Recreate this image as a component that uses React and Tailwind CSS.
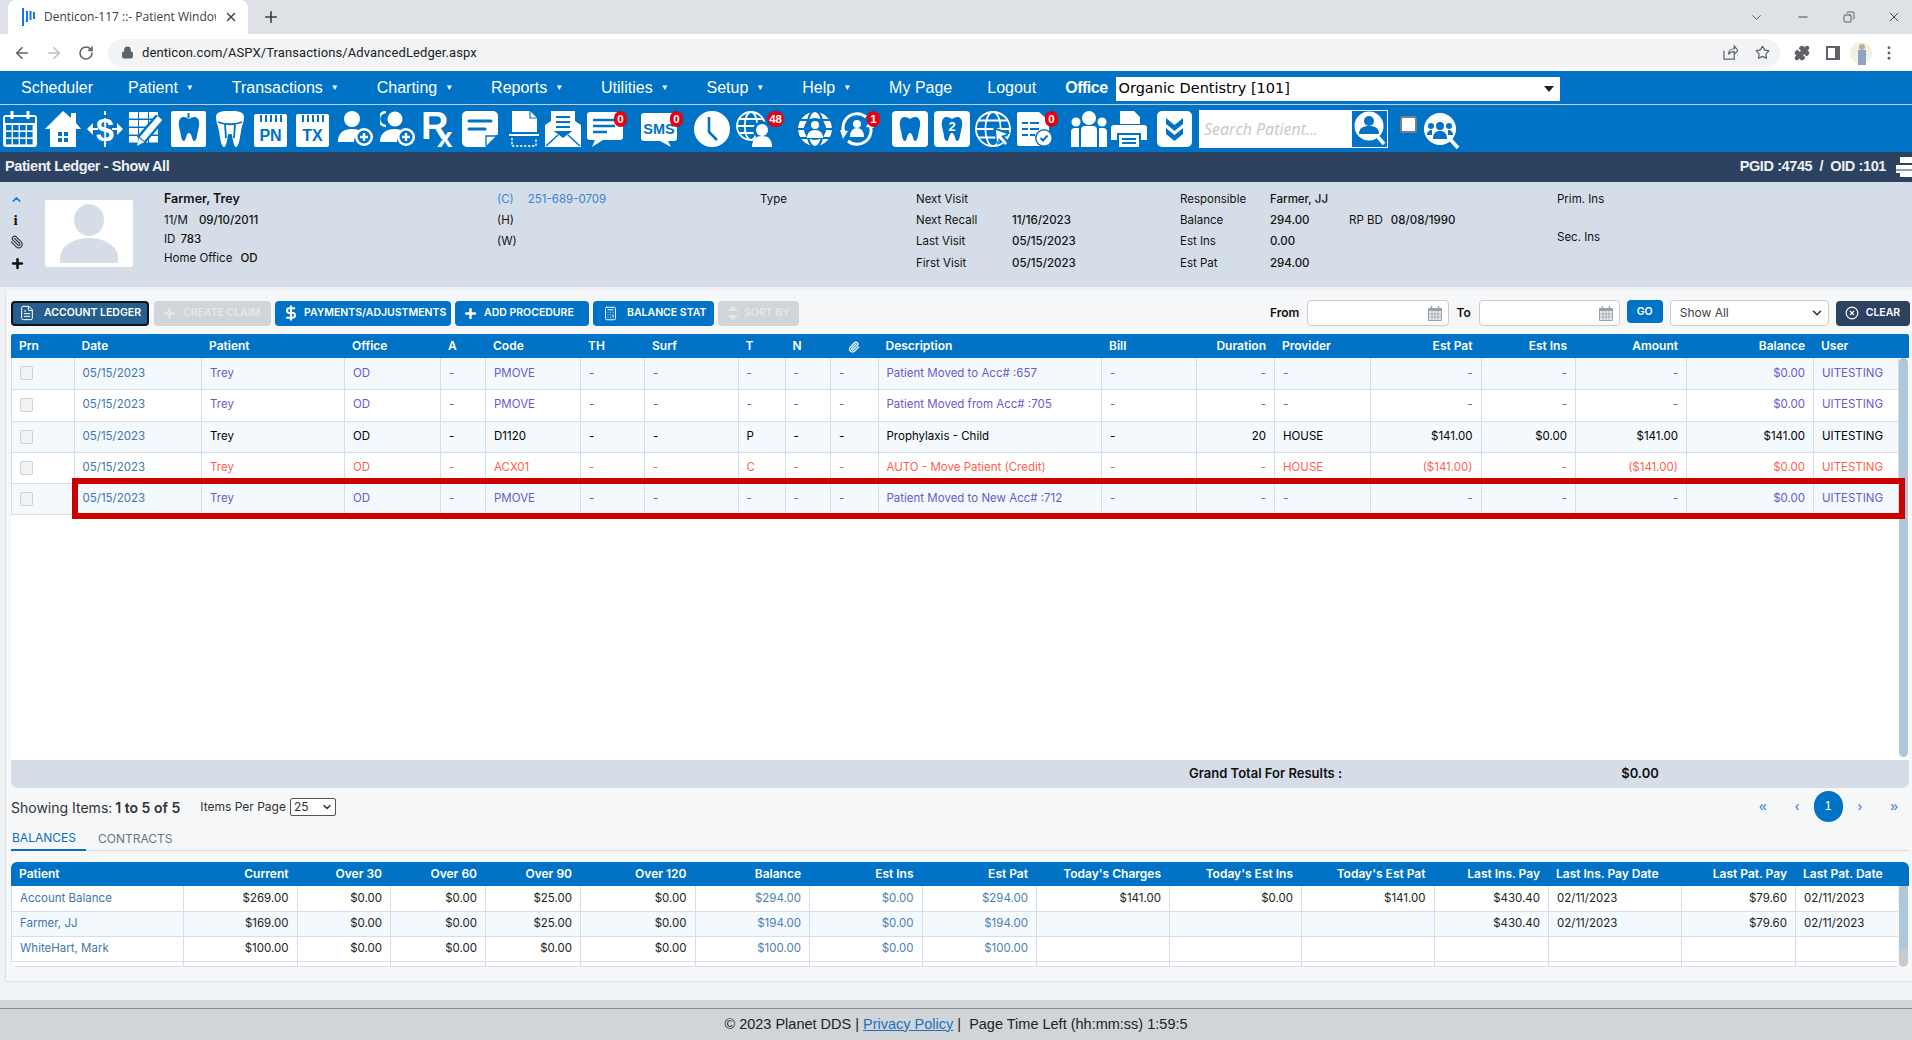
import {
  ArrowLeft,
  ArrowRight,
  RotateCw,
  Lock,
  Star,
  Puzzle,
  X,
  Plus,
  ChevronDown,
  ChevronUp,
  Minus,
  Paperclip,
  FileText,
  DollarSign,
  Calculator,
  CircleX,
  Copy,
} from "lucide-react";

const B = "#0073c6";

const Ic = ({ children, vb = "0 0 36 36" }) => (
  <svg viewBox={vb} className="w-[36px] h-[36px] block">
    {children}
  </svg>
);

const toothPath =
  "M18 8c-3-2-7-3-9 0-2 3-1 8 0 12 1 3 1 10 4 10 2 0 2-8 5-8s3 8 5 8c3 0 3-7 4-10 1-4 2-9 0-12-2-3-6-2-9 0z";

const Globe = ({ cx = 18, cy = 18, r = 16, sw = 2, stroke = "#fff" }) => (
  <g fill="none" stroke={stroke} strokeWidth={sw}>
    <circle cx={cx} cy={cy} r={r} />
    <ellipse cx={cx} cy={cy} rx={r * 0.45} ry={r} />
    <path d={`M${cx - r} ${cy}h${r * 2}M${cx - r * 0.85} ${cy - r * 0.5}h${r * 1.7}M${cx - r * 0.85} ${cy + r * 0.5}h${r * 1.7}`} />
  </g>
);

const Notepad = ({ label }) => (
  <Ic>
    <rect y="3" width="33" height="33" rx="2" fill="#fff" />
    <path d="M7 4v7M12 4v7M17 4v7M22 4v7M27 4v7" stroke={B} strokeWidth="2" />
    <text x="16.5" y="30" textAnchor="middle" fontSize="16" fontWeight="700" fontFamily="Liberation Sans" fill={B}>
      {label}
    </text>
  </Ic>
);

const icons = [
  {
    el: (
      <Ic>
        <rect y="4" width="34" height="32" rx="3" fill="#fff" />
        <rect x="2" y="6" width="30" height="6" fill={B} />
        {[14, 21, 28].map((y) =>
          [3, 10, 17, 24].map((x) => <rect key={x + "-" + y} x={x} y={y} width="5.6" height="5.4" fill={B} />),
        )}
        <path d="M9 0v8M25 0v8" stroke="#fff" strokeWidth="3" />
      </Ic>
    ),
  },
  {
    ml: "ml-[6px]",
    el: (
      <Ic>
        <path d="M18 0l8 7V2h5v10l5 6h-5v18H5V18H0z" fill="#fff" />
        <path d="M13 21h4v4h-4zM19 21h4v4h-4zM13 27h4v4h-4zM19 27h4v4h-4z" fill={B} />
      </Ic>
    ),
  },
  {
    ml: "ml-[6px]",
    el: (
      <Ic>
        <path d="M0 18l6-6v12zM36 18l-6-6v12z" fill="#fff" />
        <path d="M6 18h5M25 18h5M18 0v4M18 32v4" stroke="#fff" strokeWidth="2" />
        <text x="18" y="30" textAnchor="middle" fontSize="32" fontWeight="700" fontFamily="Liberation Sans" fill="#fff">
          $
        </text>
      </Ic>
    ),
  },
  {
    ml: "ml-[6px]",
    el: (
      <Ic>
        {[1, 9, 17, 25].map((y) =>
          [0, 10, 20].map((x) => <rect key={x + "-" + y} x={x} y={y} width="9" height="6.5" fill="#fff" />),
        )}
        <path d="M31 7L12 29" stroke={B} strokeWidth="11" />
        <path d="M31 7L13 28" stroke="#fff" strokeWidth="6" />
        <path d="M10 27l5 4-7 4z" fill="#fff" />
      </Ic>
    ),
  },
  {
    ml: "ml-[6px]",
    el: (
      <Ic>
        <rect width="35" height="36" rx="2" fill="#fff" />
        <path d="M0 7h35" stroke={B} strokeWidth="0" />
        <path d="M17.5 2v5" stroke={B} strokeWidth="2" />
        <path d={toothPath} fill={B} />
      </Ic>
    ),
  },
  {
    ml: "ml-[9px]",
    el: (
      <Ic vb="0 0 28 36">
        <path d="M14 0c6 0 14 0 14 6 0 5-2 8-3 14-1 6-2 16-5 16-2 0-3-6-4-12 0-1-1-1-2-1s-2 0-2 1c-1 6-2 12-4 12-3 0-4-10-5-16C2 14 0 11 0 6c0-6 8-6 14-6z" fill="#fff" />
        <path d="M2 11c8 3 16 3 24 0M9 13l1 14M19 13l-1 14" fill="none" stroke={B} strokeWidth="1.8" />
      </Ic>
    ),
    w: "w-[28px]",
    nar: true,
  },
  { ml: "ml-[10px]", el: <Notepad label="PN" /> },
  { ml: "ml-[6px]", el: <Notepad label="TX" /> },
  {
    ml: "ml-[6px]",
    el: (
      <Ic>
        <circle cx="14" cy="8" r="8" fill="#fff" />
        <path d="M0 31c0-9 5-13 14-13 5 0 8 1 10 3-5 1-8 5-8 10z" fill="#fff" />
        <circle cx="26" cy="26" r="9" fill="#fff" stroke={B} strokeWidth="0" />
        <circle cx="26" cy="26" r="6.5" fill={B} />
        <path d="M22 26h8M26 22v8" stroke="#fff" strokeWidth="2.4" />
      </Ic>
    ),
  },
  {
    ml: "ml-[6px]",
    el: (
      <Ic>
        <path d="M6 1a7 7 0 0 0 0 14" fill="none" stroke="#fff" strokeWidth="2.5" />
        <circle cx="15" cy="8" r="7.5" fill="#fff" />
        <path d="M0 31c0-9 6-13 15-13 4 0 7 1 9 3-5 1-7 5-7 10z" fill="#fff" />
        <circle cx="26" cy="26" r="9" fill="#fff" />
        <circle cx="26" cy="26" r="6.5" fill={B} />
        <path d="M22 26h8M26 22v8" stroke="#fff" strokeWidth="2.4" />
      </Ic>
    ),
  },
  {
    ml: "ml-[6px]",
    el: (
      <Ic>
        <text x="-1" y="28" fontSize="38" fontWeight="700" fontFamily="Liberation Sans" fill="#fff">
          R
        </text>
        <text x="15" y="36" fontSize="28" fontWeight="700" fontFamily="Liberation Sans" fill="#fff">
          x
        </text>
      </Ic>
    ),
  },
  {
    ml: "ml-[4px]",
    el: (
      <Ic>
        <path d="M5 0h26a5 5 0 0 1 5 5v18L23 36H5a5 5 0 0 1-5-5V5a5 5 0 0 1 5-5z" fill="#fff" />
        <path d="M7 10h22M7 18h16" stroke={B} strokeWidth="3" strokeLinecap="round" />
        <path d="M24 35V25h11" fill="none" stroke={B} strokeWidth="1.3" />
      </Ic>
    ),
  },
  {
    ml: "ml-[8px]",
    el: (
      <Ic>
        <path d="M6 0h18l7 7v14H6z" fill="#fff" />
        <path d="M24 0v7h7" fill="none" stroke={B} strokeWidth="1.2" />
        <path d="M3 24h30" stroke="#fff" strokeWidth="2" />
        <path d="M6 27v8h24v-8" fill="none" stroke="#fff" strokeWidth="1.4" strokeDasharray="2.4 1.6" />
      </Ic>
    ),
  },
  {
    ml: "ml-[3px]",
    el: (
      <Ic>
        <path d="M6 0h24v20H6z" fill="#fff" />
        <path d="M11 6h14M11 11h14M11 16h14" stroke={B} strokeWidth="2" />
        <path d="M0 14l6-4v8l12 9 12-9v-8l6 4v22H0z" fill="#fff" />
        <path d="M1 35l12-11M35 35L23 24" stroke={B} strokeWidth="1.5" />
      </Ic>
    ),
  },
  {
    ml: "ml-[6px]",
    badge: "0",
    badgePos: "top-0 right-[-4px]",
    el: (
      <Ic>
        <path d="M3 1h30a3 3 0 0 1 3 3v22a3 3 0 0 1-3 3H16L5 36l3-7H3a3 3 0 0 1-3-3V4a3 3 0 0 1 3-3z" fill="#fff" />
        <path d="M6 9h22M6 15h22M6 21h14" stroke={B} strokeWidth="2.6" />
      </Ic>
    ),
  },
  {
    ml: "ml-[18px]",
    badge: "0",
    badgePos: "top-0 right-[-6px]",
    el: (
      <Ic>
        <path d="M3 2h30a3 3 0 0 1 3 3v22a3 3 0 0 1-3 3h-6l3 6-11-6H3a3 3 0 0 1-3-3V5a3 3 0 0 1 3-3z" fill="#fff" />
        <text x="18" y="23" textAnchor="middle" fontSize="14.5" fontWeight="700" fontFamily="Liberation Sans" fill={B}>
          SMS
        </text>
      </Ic>
    ),
  },
  {
    ml: "ml-[17px]",
    el: (
      <Ic>
        <circle cx="18" cy="18" r="18" fill="#fff" />
        <path d="M15 6v15l8 8" fill="none" stroke={B} strokeWidth="2.6" />
      </Ic>
    ),
  },
  {
    ml: "ml-[6px]",
    badge: "48",
    badgePos: "top-0 right-[-12px]",
    el: (
      <Ic>
        <Globe cx={15} cy={15} r={14} sw={1.8} />
        <circle cx="26" cy="19" r="9" fill={B} />
        <circle cx="26" cy="19" r="6" fill="#fff" />
        <path d="M16 36c0-8 4-11 10-11s10 3 10 11z" fill="#fff" />
      </Ic>
    ),
  },
  {
    ml: "ml-[25px]",
    el: (
      <Ic>
        <circle cx="18" cy="18" r="18" fill="#fff" />
        <Globe r={18} sw={2.2} stroke={B} />
        <circle cx="18" cy="18" r="11" fill={B} />
        <circle cx="18" cy="14" r="4" fill="#fff" />
        <path d="M10 27c0-5 3-8 8-8s8 3 8 8z" fill="#fff" />
      </Ic>
    ),
  },
  {
    ml: "ml-[6px]",
    badge: "1",
    badgePos: "top-0 right-[-5px]",
    el: (
      <Ic>
        <path d="M5 22A14 14 0 0 1 27 6M31 14a14 14 0 0 1-22 16" fill="none" stroke="#fff" strokeWidth="3" />
        <path d="M1 19l8 1-5 8zM35 17l-8-1 5-8z" fill="#fff" />
        <circle cx="18" cy="13" r="4" fill="#fff" />
        <path d="M11 26c0-6 3-9 7-9s7 3 7 9z" fill="#fff" />
      </Ic>
    ),
  },
  {
    ml: "ml-[17px]",
    el: (
      <Ic>
        <rect width="36" height="36" rx="4" fill="#fff" />
        <path d={toothPath} fill={B} />
      </Ic>
    ),
  },
  {
    ml: "ml-[6px]",
    el: (
      <Ic>
        <rect width="36" height="36" rx="4" fill="#fff" />
        <path d={toothPath} fill={B} />
        <text x="18" y="20" textAnchor="middle" fontSize="13" fontWeight="700" fontFamily="Liberation Sans" fill="#fff">
          2
        </text>
      </Ic>
    ),
  },
  {
    ml: "ml-[5px]",
    el: (
      <Ic>
        <Globe r={17} sw={1.8} />
        <path d="M18 16l18 6-7 3 6 7-4 4-6-8-3 6z" fill={B} />
        <path d="M21 19l11 4-6 2 6 7-2 2-6-7-2 5z" fill="#fff" />
      </Ic>
    ),
  },
  {
    ml: "ml-[6px]",
    badge: "0",
    badgePos: "top-0 right-[-5px]",
    el: (
      <Ic>
        <path d="M2 1h20l10 9v25H2a2 2 0 0 1-2-2V3a2 2 0 0 1 2-2z" fill="#fff" />
        <path d="M5 12h6M13 12h9M5 18h6M13 18h9M5 24h6M13 24h5" stroke={B} strokeWidth="2" />
        <circle cx="27" cy="27" r="9" fill={B} />
        <circle cx="27" cy="27" r="7.5" fill="#fff" />
        <path d="M23.5 27l2.5 2.5 4.5-5" fill="none" stroke={B} strokeWidth="2" />
      </Ic>
    ),
  },
  {
    ml: "ml-[18px]",
    el: (
      <Ic>
        <circle cx="18" cy="7" r="7" fill="#fff" />
        <circle cx="5" cy="11" r="4.5" fill="#fff" />
        <circle cx="31" cy="11" r="4.5" fill="#fff" />
        <path d="M10 19a4 4 0 0 1 4-4h8a4 4 0 0 1 4 4v17H10zM0 21a4 4 0 0 1 4-4h4v19H0zM28 17h4a4 4 0 0 1 4 4v15h-8z" fill="#fff" />
      </Ic>
    ),
  },
  {
    ml: "ml-[4px]",
    el: (
      <Ic>
        <path d="M9 0h14l6 6v7H9z" fill="#fff" />
        <path d="M3 14h30a3 3 0 0 1 3 3v12h-6v-7H6v7H0V17a3 3 0 0 1 3-3z" fill="#fff" />
        <path d="M8 24h20v12H8z" fill="#fff" />
        <path d="M11 28h14M11 32h14" stroke={B} strokeWidth="2" />
      </Ic>
    ),
  },
  {
    ml: "ml-[10px]",
    el: (
      <Ic>
        <rect width="35" height="36" rx="5" fill="#fff" />
        <path d="M9 7l8.5 7L26 7v6l-8.5 7L9 13zM9 17l8.5 7L26 17v6l-8.5 7L9 23z" fill={B} />
      </Ic>
    ),
  },
];

const Badge = ({ children, pos }) => (
  <span
    className={
      "absolute h-[16px] min-w-[13px] px-[2px] rounded-full bg-[#e60012] text-white text-[11.5px] leading-[16px] font-bold text-center font-['Liberation_Sans',sans-serif] " +
      pos
    }
  >
    {children}
  </span>
);

const menu = [
  { t: "Scheduler" },
  { t: "Patient", c: 1 },
  { t: "Transactions", c: 1 },
  { t: "Charting", c: 1 },
  { t: "Reports", c: 1 },
  { t: "Utilities", c: 1 },
  { t: "Setup", c: 1 },
  { t: "Help", c: 1 },
  { t: "My Page" },
  { t: "Logout" },
];

const ledgerCols = [
  "w-[62.5px]",
  "w-[127.5px]",
  "w-[143px]",
  "w-[96px]",
  "w-[45px]",
  "w-[95px]",
  "w-[64px]",
  "w-[93.5px]",
  "w-[47px]",
  "w-[45.5px]",
  "w-[47.5px]",
  "w-[223.5px]",
  "w-[95px]",
  "w-[78px]",
  "w-[95.5px]",
  "w-[111px]",
  "w-[94.5px]",
  "w-[111px]",
  "w-[127px]",
  "w-[85px]",
];

const ledgerHead = [
  ["Prn", "l"],
  ["Date", "l"],
  ["Patient", "l"],
  ["Office", "l"],
  ["A", "l"],
  ["Code", "l"],
  ["TH", "l"],
  ["Surf", "l"],
  ["T", "l"],
  ["N", "l"],
  ["", "c"],
  ["Description", "l"],
  ["Bill", "l"],
  ["Duration", "r"],
  ["Provider", "l"],
  ["Est Pat", "r"],
  ["Est Ins", "r"],
  ["Amount", "r"],
  ["Balance", "r"],
  ["User", "l"],
];

const purple = "text-[#6a5acd]";
const moved = (desc, h, bg) => ({
  h,
  bg,
  color: purple,
  cells: ["Trey", "OD", "-", "PMOVE", "-", "-", "-", "-", "-", desc, "-", "-", "-", "-", "-", "-", "$0.00", "UITESTING"],
});

const ledgerRows = [
  moved("Patient Moved to Acc# :657", "h-[31px]", "bg-[#f4f9fd]"),
  moved("Patient Moved from Acc# :705", "h-[32px]", "bg-white"),
  {
    h: "h-[31px]",
    bg: "bg-[#f4f9fd]",
    color: "text-black",
    cells: ["Trey", "OD", "-", "D1120", "-", "-", "P", "-", "-", "Prophylaxis - Child", "-", "20", "HOUSE", "$141.00", "$0.00", "$141.00", "$141.00", "UITESTING"],
  },
  {
    h: "h-[31px]",
    bg: "bg-white",
    color: "text-[#ff5f52]",
    cells: ["Trey", "OD", "-", "ACX01", "-", "-", "C", "-", "-", "AUTO - Move Patient (Credit)", "-", "-", "HOUSE", "($141.00)", "-", "($141.00)", "$0.00", "UITESTING"],
  },
  moved("Patient Moved to New Acc# :712", "h-[31px]", "bg-[#f4f9fd]"),
];

const balCols = [
  "w-[171.5px]",
  "w-[114px]",
  "w-[93.5px]",
  "w-[95px]",
  "w-[95px]",
  "w-[114.5px]",
  "w-[114.5px]",
  "w-[112.5px]",
  "w-[114.5px]",
  "w-[133px]",
  "w-[132px]",
  "w-[132.5px]",
  "w-[114.5px]",
  "w-[133px]",
  "w-[114px]",
  "w-[104px]",
];

const balHead = [
  "Patient",
  "Current",
  "Over 30",
  "Over 60",
  "Over 90",
  "Over 120",
  "Balance",
  "Est Ins",
  "Est Pat",
  "Today's Charges",
  "Today's Est Ins",
  "Today's Est Pat",
  "Last Ins. Pay",
  "Last Ins. Pay Date",
  "Last Pat. Pay",
  "Last Pat. Date",
];

const balRows = [
  ["Account Balance", "$269.00", "$0.00", "$0.00", "$25.00", "$0.00", "$294.00", "$0.00", "$294.00", "$141.00", "$0.00", "$141.00", "$430.40", "02/11/2023", "$79.60", "02/11/2023"],
  ["Farmer, JJ", "$169.00", "$0.00", "$0.00", "$25.00", "$0.00", "$194.00", "$0.00", "$194.00", "", "", "", "$430.40", "02/11/2023", "$79.60", "02/11/2023"],
  ["WhiteHart, Mark", "$100.00", "$0.00", "$0.00", "$0.00", "$0.00", "$100.00", "$0.00", "$100.00", "", "", "", "", "", "", ""],
  ["Farmer, Trey", "$0.00", "$0.00", "$0.00", "$0.00", "$0.00", "$0.00", "$0.00", "$0.00", "", "", "", "", "", "", ""],
];

const CalIcon = () => (
  <svg viewBox="0 0 14 15" className="w-[14px] h-[15px] shrink-0">
    <rect y="2" width="14" height="13" rx="1" fill="#9aa1a8" />
    <rect x="1" y="5" width="12" height="9" fill="#eceef0" />
    <path d="M1 8h12M1 11h12M4 5v9M7 5v9M10 5v9" stroke="#9aa1a8" strokeWidth=".8" />
    <path d="M3.5 0v4M10.5 0v4" stroke="#9aa1a8" strokeWidth="1.4" />
  </svg>
);

const Btn = ({ className, icon, children }) => (
  <div
    className={
      "h-[25px] flex items-center rounded-[4px] text-[10.5px] font-semibold uppercase whitespace-nowrap " + className
    }
  >
    {icon}
    {children}
  </div>
);

const Row = ({ l, v, lw = "w-[96px]", h = "h-[21px]" }) => (
  <div className={"flex items-center " + h}>
    <span className={"shrink-0 " + lw}>{l}</span>
    <span className="font-medium">{v}</span>
  </div>
);

const App = () => {
  return (
    <div className="w-[1912px] h-[1040px] overflow-hidden flex flex-col bg-[#f0f3f6] font-['Inter',sans-serif] text-black">
      {/* chrome tabs */}
      <div className="h-[34px] shrink-0 bg-[#dee1e6] flex items-end pl-[8px] pr-[10px]">
        <div className="w-[240px] h-[34px] bg-white rounded-t-[8px] flex items-center pl-[14px] pr-[10px] font-['Open_Sans',sans-serif]">
          <svg viewBox="0 0 14 18" className="w-[14px] h-[18px] shrink-0">
            <path d="M1 0v18M5 3v11M8.5 3v9M12 4v7" stroke="#1a73e8" strokeWidth="2" />
          </svg>
          <span className="ml-[8px] text-[12px] text-[#3c4043] whitespace-nowrap overflow-hidden w-[172px]">Denticon-117 ::- Patient Window</span>
          <X size={14} className="ml-auto text-[#3c4043]" strokeWidth={2.4} />
        </div>
        <div className="ml-[14px] h-[34px] flex items-center">
          <Plus size={18} className="text-[#3c4043]" strokeWidth={2.2} />
        </div>
        <div className="ml-auto h-[34px] flex items-center text-[#3c4043]">
          <ChevronDown size={15} strokeWidth={1.4} />
          <Minus size={14} strokeWidth={1.6} className="ml-[32px]" />
          <Copy size={12} strokeWidth={1.6} className="ml-[33px] -scale-x-100" />
          <X size={16} strokeWidth={1.4} className="ml-[31px]" />
        </div>
      </div>
      {/* chrome toolbar */}
      <div className="h-[37px] shrink-0 bg-white flex items-center pl-[13px] pr-[8px]">
        <ArrowLeft size={18} className="text-[#5f6368]" strokeWidth={2.2} />
        <ArrowRight size={18} className="ml-[14px] text-[#bdc1c6]" strokeWidth={2.2} />
        <RotateCw size={16} className="ml-[15px] text-[#5f6368]" strokeWidth={2.4} />
        <div className="ml-[14px] w-[1672px] h-[28px] rounded-full bg-[#f1f3f4] flex items-center pl-[13px]">
          <Lock size={13} className="text-[#5f6368]" fill="#5f6368" />
          <span className="ml-[8px] text-[13px] tracking-[0.1px] text-[#202124] font-['Roboto',sans-serif]">denticon.com/ASPX/Transactions/AdvancedLedger.aspx</span>
          <svg viewBox="0 0 16 16" className="ml-auto w-[15px] h-[15px]" fill="none" stroke="#5f6368" strokeWidth="1.3">
            <path d="M1 6v9h11v-4M6 10c0-4 3-6 6-6V1l4 5-4 4V7c-3 0-5 1-6 3z" />
          </svg>
          <Star size={15} className="ml-[17px] mr-[10px] text-[#5f6368]" strokeWidth={2} />
        </div>
        <Puzzle size={16} className="ml-[14px] text-[#5f6368]" fill="#5f6368" />
        <svg viewBox="0 0 14 14" className="ml-[16px] w-[14px] h-[14px]">
          <path d="M0 0h14v14H0z" fill="#5f6368" />
          <path d="M2 2h7v10H2z" fill="#fff" />
        </svg>
        <svg viewBox="0 0 22 24" className="ml-[10px] w-[22px] h-[24px]">
          <circle cx="11" cy="12" r="11" fill="#eef2e4" />
          <circle cx="12" cy="6" r="3" fill="#c8a88c" />
          <path d="M8 9h8v15H8z" fill="#8fa3bd" />
        </svg>
        <svg viewBox="0 0 4 16" className="ml-[15px] w-[4px] h-[14px]" fill="#5f6368">
          <circle cx="2" cy="2" r="1.6" />
          <circle cx="2" cy="8" r="1.6" />
          <circle cx="2" cy="14" r="1.6" />
        </svg>
      </div>
      {/* app menu */}
      <div className="h-[34px] shrink-0 bg-[#0073c6] border-b border-[#c7ccd1] flex items-center pl-[21px] gap-[35px] text-white text-[16px] font-['Liberation_Sans',sans-serif]">
        {menu.map((m) => (
          <div key={m.t} className={m.c ? "flex items-center mr-[3px]" : "flex items-center"}>
            <span>{m.t}</span>
            {m.c && <span className="ml-[8px] text-[8px] leading-none">▼</span>}
          </div>
        ))}
        <div className="flex items-center -ml-[6px]">
          <span className="font-bold tracking-[-0.5px] mr-[8px]">Office</span>
          <div className="w-[444px] h-[24px] bg-white flex items-center pl-[3px] pr-[6px] text-black text-[14.5px] font-['DejaVu_Sans',sans-serif] relative top-[1px]">
            Organic Dentistry [101]
            <span className="ml-auto w-0 h-0 border-x-[5px] border-x-transparent border-t-[6px] border-t-[#222]" />
          </div>
        </div>
      </div>
      {/* icon bar */}
      <div className="h-[47px] shrink-0 bg-[#0073c6] flex items-center pl-[3px]">
        {icons.map((ic, i) => (
          <div key={i} className={"relative shrink-0 " + (ic.ml || "") + (ic.nar ? " w-[28px]" : " w-[36px]")}>
            {ic.nar ? (
              <svg viewBox="0 0 28 36" className="w-[28px] h-[36px] block">
                {ic.el.props.children}
              </svg>
            ) : (
              ic.el
            )}
            {ic.badge && <Badge pos={ic.badgePos}>{ic.badge}</Badge>}
          </div>
        ))}
        <div className="ml-[6px] w-[189px] h-[38px] bg-white border border-white flex items-center">
          <span className="pl-[4px] flex-1 italic text-[16px] text-[#c9c6c6] font-['Open_Sans',sans-serif]">Search Patient...</span>
          <div className="w-[35px] h-[36px] bg-[#0073c6] shrink-0">
            <svg viewBox="0 0 35 36" className="w-[35px] h-[36px]">
              <circle cx="17" cy="15" r="14.5" fill="#fff" />
              <path d="M26 26l6 7" stroke="#fff" strokeWidth="3.5" />
              <circle cx="17" cy="10" r="5" fill={B} />
              <path d="M7 23c0-6 4-8 10-8s10 2 10 8z" fill={B} />
            </svg>
          </div>
        </div>
        <span className="ml-[12px] mb-[8px] w-[17px] h-[17px] bg-white rounded-[3px] border-2 border-[#7a7f85]" />
        <div className="ml-[7px] mt-[4px]">
          <svg viewBox="0 0 36 36" className="w-[36px] h-[36px] block">
            <circle cx="16" cy="16" r="16" fill="#fff" />
            <path d="M26 26l8 9" stroke="#fff" strokeWidth="3.6" />
            <circle cx="16" cy="13" r="4" fill={B} />
            <circle cx="7" cy="13" r="3" fill={B} />
            <circle cx="25" cy="13" r="3" fill={B} />
            <path d="M9 26c0-6 3-8 7-8s7 2 7 8zM3 22c0-3 2-5 5-5v5zM29 22c0-3-2-5-5-5v5z" fill={B} />
          </svg>
        </div>
      </div>
      {/* title bar */}
      <div className="h-[30px] shrink-0 bg-[#2c4260] flex items-center pl-[5px] text-[#eef0f2] text-[14.5px] font-bold tracking-[-0.4px] font-['Liberation_Sans',sans-serif] overflow-hidden">
        <span>Patient Ledger - Show All</span>
        <span className="ml-auto">PGID :4745&nbsp; /&nbsp; OID :101</span>
        <svg viewBox="0 0 18 20" className="ml-[10px] mr-[-2px] w-[18px] h-[20px] shrink-0" fill="#fff">
          <path d="M4 0h14v6H4zM0 8h18v8H0zM4 14h14v6H4z" />
          <path d="M0 13h18" stroke="#2c4260" strokeWidth="1" />
        </svg>
      </div>
      {/* patient info */}
      <div className="h-[105px] shrink-0 bg-[#d5dee8] flex text-[11.5px] text-[#111]">
        <div className="w-[45px] shrink-0 pl-[10px] pt-[11px] flex flex-col items-start gap-[7px]">
          <ChevronUp size={13} strokeWidth={3} className="text-[#1c7fd0]" />
          <span className="h-[15px] w-[11px] text-center text-[15px] leading-[15px] font-bold font-['Liberation_Serif',serif]">i</span>
          <Paperclip size={14} strokeWidth={2} className="text-[#333] -scale-x-100" />
          <Plus size={15} strokeWidth={4} />
        </div>
        <div className="mt-[18px] w-[88px] h-[67px] shrink-0 bg-white rounded-[2px] flex items-end justify-center overflow-hidden">
          <svg viewBox="0 0 88 67" className="w-[88px] h-[67px]">
            <ellipse cx="44" cy="20" rx="15" ry="16" fill="#d5dee8" />
            <path d="M15 63V58c0-12 14-20 29-20s29 8 29 20v5z" fill="#d5dee8" />
          </svg>
        </div>
        <div className="ml-[31px] w-[333px] shrink-0 pt-[7px]">
          <div className="h-[21px] flex items-center text-[12.5px] font-semibold">Farmer, Trey</div>
          <div className="h-[22px] flex items-center">
            11/M<span className="ml-[11px] font-medium">09/10/2011</span>
          </div>
          <div className="h-[15px] flex items-center">
            ID<span className="ml-[5px] font-medium">783</span>
          </div>
          <div className="h-[24px] flex items-center">
            Home Office<span className="ml-[8px] font-medium">OD</span>
          </div>
        </div>
        <div className="w-[263px] shrink-0 pt-[7px]">
          <div className="h-[21px] flex items-center text-[#3c7fd9]">
            (C)<span className="ml-[14px]">251-689-0709</span>
          </div>
          <div className="h-[21px] flex items-center">(H)</div>
          <div className="h-[22px] flex items-center">(W)</div>
        </div>
        <div className="w-[156px] shrink-0 pt-[7px]">
          <div className="h-[21px] flex items-center">Type</div>
        </div>
        <div className="w-[264px] shrink-0 pt-[7px]">
          <Row l="Next Visit" v="" />
          <Row l="Next Recall" v="11/16/2023" />
          <Row l="Last Visit" v="05/15/2023" h="h-[22px]" />
          <Row l="First Visit" v="05/15/2023" />
        </div>
        <div className="w-[377px] shrink-0 pt-[7px]">
          <Row l="Responsible" v="Farmer, JJ" lw="w-[90px]" />
          <div className="h-[21px] flex items-center">
            <span className="w-[90px]">Balance</span>
            <span className="w-[79px] font-medium">294.00</span>
            <span>RP BD</span>
            <span className="ml-[8px] font-medium">08/08/1990</span>
          </div>
          <Row l="Est Ins" v="0.00" lw="w-[90px]" h="h-[22px]" />
          <Row l="Est Pat" v="294.00" lw="w-[90px]" />
        </div>
        <div className="pt-[7px]">
          <div className="h-[21px] flex items-center">Prim. Ins</div>
          <div className="mt-[17px] h-[21px] flex items-center">Sec. Ins</div>
        </div>
      </div>
      {/* main panel */}
      <div className="mt-[3px] ml-[5px] w-[1907px] h-[692px] shrink-0 border-l border-b border-[#dde2e8] bg-[#f5f7f9] pl-[5px] pr-[2px] pt-[10px] flex flex-col">
        <div className="h-[26px] shrink-0 flex items-center text-white">
          <Btn
            className="w-[138px] bg-[#265e8e] border-2 border-[#10161d] pl-[6px] gap-[9px]"
            icon={<FileText size={16} strokeWidth={1.5} />}
          >
            Account Ledger
          </Btn>
          <Btn
            className="ml-[5px] w-[117px] bg-[#d1d5da] text-[#e4e7ea] pl-[8px] gap-[6px]"
            icon={<Plus size={15} strokeWidth={4} />}
          >
            Create Claim
          </Btn>
          <Btn
            className="ml-[4px] w-[176px] bg-[#0073c6] pl-[8px] gap-[5px]"
            icon={<DollarSign size={16} strokeWidth={3} />}
          >
            Payments/Adjustments
          </Btn>
          <Btn
            className="ml-[4px] w-[134px] bg-[#0073c6] pl-[8px] gap-[6px]"
            icon={<Plus size={15} strokeWidth={4} />}
          >
            Add Procedure
          </Btn>
          <Btn
            className="ml-[4px] w-[121px] bg-[#0073c6] pl-[10px] gap-[9px]"
            icon={<Calculator size={15} strokeWidth={1.6} />}
          >
            Balance Stat
          </Btn>
          <Btn
            className="ml-[4px] w-[81px] bg-[#d1d5da] text-[#e4e7ea] pl-[10px] gap-[6px]"
            icon={
              <svg viewBox="0 0 10 14" className="w-[10px] h-[14px]" fill="currentColor">
                <path d="M5 0l5 5H0zM5 14L0 9h10z" />
              </svg>
            }
          >
            Sort By
          </Btn>
          <span className="ml-[471px] text-[12px] font-semibold text-[#111]">From</span>
          <div className="ml-[8px] w-[142px] h-[26px] bg-white border border-[#c9cdd2] rounded-[4px] flex items-center justify-end pr-[6px]">
            <CalIcon />
          </div>
          <span className="ml-[7px] text-[12px] font-semibold text-[#111]">To</span>
          <div className="ml-[8px] w-[141px] h-[26px] bg-white border border-[#c9cdd2] rounded-[4px] flex items-center justify-end pr-[6px]">
            <CalIcon />
          </div>
          <div className="ml-[7px] w-[36px] h-[23px] mb-[3px] bg-[#0073c6] rounded-[4px] text-[10.5px] font-semibold flex items-center justify-center">GO</div>
          <div className="ml-[7px] w-[159px] h-[26px] bg-white border border-[#c9cdd2] rounded-[4px] flex items-center pl-[9px] pr-[4px] text-[12px] text-[#444]">
            Show All
            <ChevronDown size={14} strokeWidth={2.6} className="ml-auto text-[#333]" />
          </div>
          <Btn
            className="ml-[7px] w-[74px] bg-[#2c4260] pl-[9px] gap-[7px]"
            icon={<CircleX size={14} strokeWidth={2} />}
          >
            Clear
          </Btn>
        </div>
        <div className="mt-[8px] h-[24px] shrink-0 bg-[#0073c6] w-[1898px] rounded-t-[2px]">
          <table className="table-fixed w-[1887px] border-collapse text-white text-[12px] font-semibold">
            <colgroup>
              {ledgerCols.map((c, i) => (
                <col key={i} className={c} />
              ))}
            </colgroup>
            <thead>
              <tr className="h-[24px]">
                {ledgerHead.map(([t, a], i) => (
                  <th
                    key={i}
                    className={
                      "px-[8px] font-semibold whitespace-nowrap " +
                      (a === "r" ? "text-right" : a === "c" ? "text-center" : "text-left")
                    }
                  >
                    {i === 10 ? <Paperclip size={12} strokeWidth={2.5} className="inline" /> : t}
                  </th>
                ))}
              </tr>
            </thead>
          </table>
        </div>
        <div className="h-[402px] shrink-0 w-[1898px] bg-white flex">
          <div className="relative w-[1887px] shrink-0">
            <table className="table-fixed w-[1887px] border-collapse text-[11.5px]">
              <colgroup>
                {ledgerCols.map((c, i) => (
                  <col key={i} className={c} />
                ))}
              </colgroup>
              <tbody>
                {ledgerRows.map((r, i) => (
                  <tr key={i} className={r.h + " " + r.bg + " " + r.color}>
                    <td className="border-l border-r border-b border-[#d5dee8] pl-[8px]">
                      <span className="block w-[13px] h-[14px] bg-[#f2f2f2] border border-[#cfd2d6] rounded-[2px]" />
                    </td>
                    <td className="border-r border-b border-[#d5dee8] px-[8px] text-[#3f78ad]">05/15/2023</td>
                    {r.cells.map((c, j) => {
                      const right = [11, 13, 14, 15, 16].includes(j) && j !== 11;
                      const dur = j === 11;
                      return (
                        <td
                          key={j}
                          className={
                            "border-r border-b border-[#d5dee8] px-[8px] whitespace-nowrap " +
                            (right || dur ? "text-right" : "text-left")
                          }
                        >
                          {c}
                        </td>
                      );
                    })}
                  </tr>
                ))}
              </tbody>
            </table>
            <div className="absolute top-[120px] left-[61px] w-[1833px] h-[41px] border-[6px] border-[#cc0000]" />
          </div>
          <div className="w-[9px] ml-[1px] h-[399px] rounded-full bg-[#b0c6d9]" />
        </div>
        <div className="h-[28px] shrink-0 w-[1898px] bg-[#d5dee8] rounded-b-[6px] flex items-center text-[13px] font-semibold text-[#111]">
          <span className="ml-[1178px]">Grand Total For Results :</span>
          <span className="ml-[279px]">$0.00</span>
        </div>
        <div className="h-[38px] shrink-0 w-[1898px] flex items-center text-[#333]">
          <span className="text-[14px]">Showing Items:</span>
          <span className="ml-[3px] text-[14px] font-semibold">1 to 5 of 5</span>
          <span className="ml-[20px] text-[12px]">Items Per Page</span>
          <div className="ml-[4px] w-[46px] h-[18px] bg-white border border-[#555] rounded-[2px] flex items-center pl-[3px] pr-[2px] text-[12px]">
            25
            <ChevronDown size={12} strokeWidth={3} className="ml-auto" />
          </div>
          <div className="ml-auto flex items-center text-[#2f6fd0] text-[14px] font-['Liberation_Sans',sans-serif] mb-[2px]">
            <span>«</span>
            <span className="ml-[28px]">‹</span>
            <span className="ml-[14px] w-[29px] h-[31px] rounded-full bg-[#0073c6] text-white text-[12px] flex items-center justify-center">1</span>
            <span className="ml-[15px]">›</span>
            <span className="ml-[28px] mr-[11px]">»</span>
          </div>
        </div>
        <div className="h-[25px] shrink-0 w-[1898px] border-b border-[#d9dee5] flex text-[12px]">
          <div className="w-[75px] h-[25px] border-b-2 border-[#0b6fbd] text-[#0b6fbd] pl-[1px] flex items-center">BALANCES</div>
          <div className="ml-[12px] h-[25px] text-[#6b7480] flex items-center">CONTRACTS</div>
        </div>
        <div className="mt-[11px] w-[1898px] h-[105px] shrink-0 overflow-hidden rounded-[6px] relative">
          <div className="h-[24px] bg-[#0073c6]">
            <table className="table-fixed w-[1887px] border-collapse text-white text-[12px] font-semibold">
              <colgroup>
                {balCols.map((c, i) => (
                  <col key={i} className={c} />
                ))}
              </colgroup>
              <thead>
                <tr className="h-[24px]">
                  {balHead.map((t, i) => (
                    <th
                      key={t}
                      className={
                        "px-[8px] font-semibold whitespace-nowrap " +
                        (i === 0 || i === 13 || i === 15 ? "text-left" : "text-right")
                      }
                    >
                      {t}
                    </th>
                  ))}
                </tr>
              </thead>
            </table>
          </div>
          <div className="flex h-[81px]">
            <div className="w-[1887px] h-[81px] overflow-hidden bg-white shrink-0 border-b border-[#d9dcea]">
              <table className="table-fixed w-[1887px] border-collapse text-[11.5px]">
                <colgroup>
                  {balCols.map((c, i) => (
                    <col key={i} className={c} />
                  ))}
                </colgroup>
                <tbody>
                  {balRows.map((r, i) => (
                    <tr key={i} className={"h-[25px] " + (i === 1 ? "bg-[#f4f9fd]" : "bg-white")}>
                      {r.map((c, j) => (
                        <td
                          key={j}
                          className={
                            "border-r border-b border-[#d9dcea] px-[8px] whitespace-nowrap " +
                            (j === 0 ? "border-l text-left text-[#3f78ad] " : "") +
                            (j === 13 || j === 15 ? "text-left text-[#222] " : "") +
                            (j > 0 && j !== 13 && j !== 15 ? "text-right " : "") +
                            (j >= 6 && j <= 8 ? "text-[#4d7fb5]" : j > 0 ? "text-[#222]" : "")
                          }
                        >
                          {c}
                        </td>
                      ))}
                    </tr>
                  ))}
                </tbody>
              </table>
            </div>
            <div className="w-[9px] ml-[1px] h-[81px] rounded-b-full bg-[#c8cbce] overflow-hidden">
              <div className="h-[64px] rounded-full bg-[#b0c6d9]" />
            </div>
          </div>
        </div>
      </div>
      <div className="h-[18px] shrink-0" />
      {/* footer */}
      <div className="h-[40px] shrink-0 bg-[#d1d5d8]">
        <div className="mt-[8px] h-[32px] border-t border-[#8a8c8e] flex items-center justify-center text-[14.5px] text-[#222] font-['Liberation_Sans',sans-serif]">
          <span>© 2023 Planet DDS |&nbsp;</span>
          <span className="text-[#1f6fbf] underline">Privacy Policy</span>
          <span>&nbsp;|&nbsp; Page Time Left (hh:mm:ss) 1:59:5</span>
        </div>
      </div>
    </div>
  );
};

export default App;
